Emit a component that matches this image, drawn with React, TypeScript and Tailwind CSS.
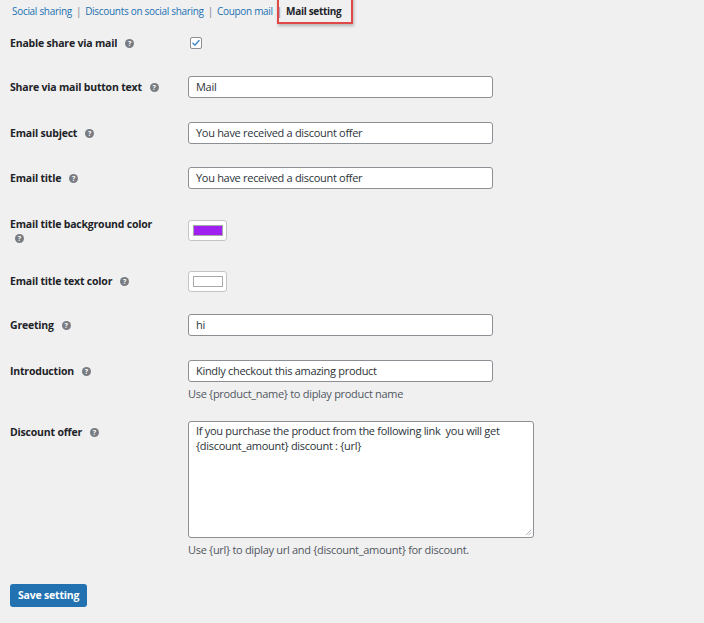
import React from 'react';

const font = { fontFamily: '"Open Sans", "Noto Sans", sans-serif' };

const Help = () => (
  <span className="inline-flex items-center justify-center w-[9px] h-[9px] rounded-full bg-[#787c82] text-white text-[7px] font-bold leading-none align-middle tracking-normal">
    ?
  </span>
);

const Label = ({ text, wrapIcon }: { text: string; wrapIcon?: boolean }) => (
  <div className="w-[178px] shrink-0 text-[10.5px] font-bold text-[#1d2327] leading-[14px] tracking-[-0.2px]">
    {text}
    {wrapIcon ? (
      <div className="pl-[5px] mt-[-1px]">
        <Help />
      </div>
    ) : (
      <span className="ml-[8px] relative top-[-1px]">
        <Help />
      </span>
    )}
  </div>
);

const TextInput = ({ value }: { value: string }) => (
  <div className="w-[305px] h-[22px] bg-white border border-[#8c8f94] rounded-[3px] px-[7px] flex items-center text-[11px] tracking-[-0.3px] text-[#2c3338]">
    {value}
  </div>
);

const Swatch = ({ color }: { color: string }) => (
  <div className="w-[39px] h-[21px] bg-white border border-[#c3c4c7] rounded-[3px] flex items-center justify-center">
    <div className="w-[30px] h-[11px] border border-[#a7aaad]" style={{ background: color }} />
  </div>
);

const Hint = ({ text }: { text: string }) => (
  <div className="text-[11px] tracking-[-0.3px] text-[#50575e] leading-[15px] mt-[4px]">{text}</div>
);

export default function App() {
  return (
    <div className="min-h-screen w-full bg-[#f0f0f1] text-[#1d2327] pl-[10px]" style={font}>
      {/* tabs */}
      <div className="relative flex items-center h-[22px] pl-[2px] text-[10px] leading-[15px] tracking-[-0.3px]">
        <a className="text-[#2271b1]">Social sharing</a>
        <span className="text-[#787c82] mx-[4px]">|</span>
        <a className="text-[#2271b1]">Discounts on social sharing</a>
        <span className="text-[#787c82] mx-[4px]">|</span>
        <a className="text-[#2271b1]">Coupon mail</a>
        <span className="text-[#787c82] mx-[4px]">|</span>
        <span className="relative font-bold text-[#1d2327]">
          Mail setting
          <span className="absolute left-[-9px] top-[-11px] w-[76px] h-[31px] border-2 border-[#e04848] shadow-[1px_2px_3px_rgba(0,0,0,0.25)]" />
        </span>
      </div>

      <div className="mt-[10px]">
        {/* enable */}
        <div className="flex items-center h-[22px]">
          <Label text="Enable share via mail" />
          <div className="w-[12px] h-[12px] ml-[2px] bg-white border border-[#8c8f94] rounded-[2px] flex items-center justify-center">
            <svg viewBox="0 0 12 12" className="w-[10px] h-[10px]">
              <path d="M2.3 6.2 L4.8 8.6 L9.6 3" fill="none" stroke="#3582c4" strokeWidth="1.6" strokeLinecap="round" strokeLinejoin="round" />
            </svg>
          </div>
        </div>

        <div className="flex items-center mt-[22px]">
          <Label text="Share via mail button text" />
          <TextInput value="Mail" />
        </div>

        <div className="flex items-center mt-[24px]">
          <Label text="Email subject" />
          <TextInput value="You have received a discount offer" />
        </div>

        <div className="flex items-center mt-[23px]">
          <Label text="Email title" />
          <TextInput value="You have received a discount offer" />
        </div>

        <div className="flex items-start mt-[31px]">
          <div className="mt-[-3px]">
            <Label text="Email title background color" wrapIcon />
          </div>
          <Swatch color="#a020f0" />
        </div>

        <div className="flex items-center mt-[27px]">
          <div className="mt-[-1px]">
            <Label text="Email title text color" />
          </div>
          <Swatch color="#ffffff" />
        </div>

        <div className="flex items-center mt-[22px]">
          <Label text="Greeting" />
          <TextInput value="hi" />
        </div>

        <div className="flex items-start mt-[24px]">
          <div className="pt-[4px]">
            <Label text="Introduction" />
          </div>
          <div>
            <TextInput value="Kindly checkout this amazing product" />
            <Hint text="Use {product_name} to diplay product name" />
          </div>
        </div>

        <div className="flex items-start mt-[20px]">
          <div className="pt-[4px]">
            <Label text="Discount offer" />
          </div>
          <div>
            <div className="relative w-[346px] h-[117px] bg-white border border-[#8c8f94] rounded-[3px] px-[7px] pt-[1px] text-[11px] tracking-[-0.3px] leading-[15px] text-[#2c3338]">
              If you purchase the product from the following link&nbsp; you will get
              <br />
              {'{discount_amount} discount : {url}'}
              <svg viewBox="0 0 8 8" className="absolute right-[1px] bottom-[1px] w-[7px] h-[7px]">
                <path d="M7 1 L1 7 M7 4 L4 7" stroke="#a7aaad" strokeWidth="1" />
              </svg>
            </div>
            <Hint text="Use {url} to diplay url and {discount_amount} for discount." />
          </div>
        </div>

        <button className="mt-[27px] h-[23px] px-[8px] bg-[#2271b1] text-white text-[10.5px] tracking-[-0.2px] font-bold rounded-[3px] leading-none">
          Save setting
        </button>
      </div>
    </div>
  );
}
